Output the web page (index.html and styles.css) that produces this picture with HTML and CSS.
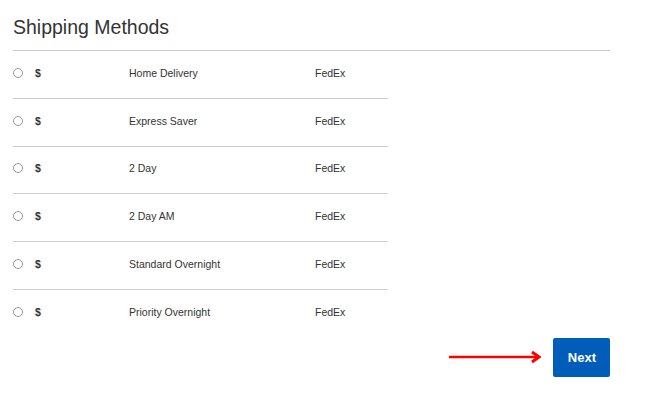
FILE: index.html
```html
<!DOCTYPE html>
<html lang="en">
<head>
    <meta charset="UTF-8">
    <meta name="viewport" content="width=device-width, initial-scale=1.0">
    <title>Shipping Methods</title>
    <link rel="stylesheet" href="styles.css">
</head>
<body>
    <div class="page">
        <h1 class="title">Shipping Methods</h1>

        <form class="methods">
            <label class="method">
                <input type="radio" name="ship">
                <span class="price">$</span>
                <span class="name">Home Delivery</span>
                <span class="carrier">FedEx</span>
            </label>
            <label class="method">
                <input type="radio" name="ship">
                <span class="price">$</span>
                <span class="name">Express Saver</span>
                <span class="carrier">FedEx</span>
            </label>
            <label class="method">
                <input type="radio" name="ship">
                <span class="price">$</span>
                <span class="name">2 Day</span>
                <span class="carrier">FedEx</span>
            </label>
            <label class="method">
                <input type="radio" name="ship">
                <span class="price">$</span>
                <span class="name">2 Day AM</span>
                <span class="carrier">FedEx</span>
            </label>
            <label class="method">
                <input type="radio" name="ship">
                <span class="price">$</span>
                <span class="name">Standard Overnight</span>
                <span class="carrier">FedEx</span>
            </label>
            <label class="method">
                <input type="radio" name="ship">
                <span class="price">$</span>
                <span class="name">Priority Overnight</span>
                <span class="carrier">FedEx</span>
            </label>
        </form>

        <div class="actions">
            <svg class="arrow" width="92" height="14" viewBox="0 0 92 14">
                <line x1="0" y1="7" x2="89" y2="7" stroke="#f00" stroke-width="2.5"/>
                <polyline points="83,2 90,7 83,12" fill="none" stroke="#f00" stroke-width="3"/>
            </svg>
            <button type="button" class="next">Next</button>
        </div>
    </div>
</body>
</html>
```

FILE: styles.css
```css
body {
    margin: 0;
    background: white;
    font-family: "Liberation Sans", Arial, sans-serif;
    color: #333;
}
.page {
    width: 597px;
    padding: 16px 13px 0;
}
.title {
    margin: 0;
    font-size: 19.5px;
    line-height: 23px;
    font-weight: normal;
    color: #333;
    padding-bottom: 11px;
    border-bottom: 1px solid #ccc;
}
.methods {
    width: 375px;
    margin: 0;
}
.method {
    display: grid;
    grid-template-columns: 22px 94px 186px auto;
    align-items: center;
    height: 47.75px;
    padding-bottom: 3px;
    box-sizing: border-box;
    font-size: 10.5px;
    border-bottom: 1px solid #ccc;
}
.method:last-child {
    border-bottom: none;
}
.method input {
    appearance: none;
    width: 10px;
    height: 10px;
    margin: 0;
    border: 1px solid #999;
    border-radius: 50%;
    background: white;
}
.price {
    font-weight: bold;
}
.actions {
    display: flex;
    justify-content: flex-end;
    align-items: center;
    gap: 12px;
}
.next {
    height: 39px;
    padding: 0 14px 0 15px;
    border: none;
    border-radius: 2px;
    background: #005db9;
    color: white;
    font-family: "Liberation Sans", Arial, sans-serif;
    font-size: 13px;
    font-weight: bold;
    cursor: pointer;
}
```
